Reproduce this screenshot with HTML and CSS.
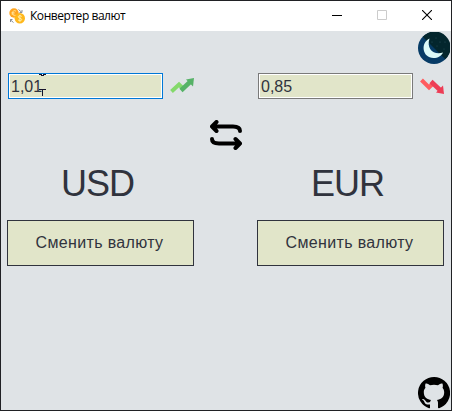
FILE: index.html
```html
<!DOCTYPE html>
<html lang="ru">
<head>
<meta charset="utf-8">
<title>Конвертер валют</title>
<link rel="stylesheet" href="styles.css">
</head>
<body>
<div class="window">
  <header class="titlebar">
    <svg class="app-icon" width="16" height="16" viewBox="0 0 16 16">
      <path d="M9.5 1.5 13 4.500M13 2v2.500h-2.500M1 11.500 4.500 14.500M1.500 14v-2.500h2" fill="none" stroke="#8a9097" stroke-width="1"/>
      <circle cx="5" cy="5" r="4.700" fill="#ffa51f"/>
      <path d="M7 3.200C4.500 1.700 3.500 3.700 3.500 5.200s1.500 3.300 3.500 2M2.500 4.700h3M2.500 6h3" fill="none" stroke="#ffe9a0" stroke-width=".9"/>
      <circle cx="10.800" cy="10.300" r="5.200" fill="#ffb81c"/>
      <path d="M12.800 8.500c-1-1.200-3.700-1-3.600.4.100 1.500 3.500 1.100 3.500 2.700 0 1.400-2.700 1.500-3.700.3M10.900 6.800v7" fill="none" stroke="#fff0b5" stroke-width=".9"/>
    </svg>
    <h1 class="title">Конвертер валют</h1>
    <div class="controls">
      <svg width="10" height="10" viewBox="0 0 10 10"><path d="M0 5.500h10" stroke="#000"/></svg>
      <svg width="10" height="10" viewBox="0 0 10 10"><path d="M.5.5h9v9h-9z" fill="none" stroke="#ccc"/></svg>
      <svg width="10" height="10" viewBox="0 0 10 10"><path d="m0 0 10 10M10 0 0 10" stroke="#000" stroke-width="1.100"/></svg>
    </div>
  </header>
  <main class="content">
    <svg class="corner" width="32" height="32" viewBox="0 0 32 32">
      <circle cx="16" cy="16" r="16" fill="#063b66"/>
      <path d="M4.700 4.700A16 16 0 1 1 27.300 27.300Z" fill="#03262d"/>
      <path d="M11.500 6.500C2 11 4.500 26 15.500 26c4.500 0 8-2 9.500-5.500C16 23.500 8 17 11.500 6.500Z" fill="#dcfaf9"/>
      <g fill="#2c555e"><circle cx="14" cy="10" r=".6"/><circle cx="18" cy="6" r=".5"/><circle cx="22" cy="10" r=".6"/><circle cx="27" cy="10" r=".6"/><circle cx="19" cy="14" r=".5"/><circle cx="26" cy="17" r=".5"/><circle cx="9" cy="27" r=".5"/></g>
    </svg>
    <div class="row fields">
      <div class="field">
        <div class="input focused">1,01
          <svg class="cursor" width="8" height="23" viewBox="0 0 8 23"><path d="M0 .5h3M4 .5h3M2 1.500h3M0 15.500h7M3.500 15v7" fill="none" stroke="#17142b"/></svg>
        </div>
        <svg width="24" height="16" viewBox="0 0 24 16"><path d="m1.500 13.500 7.500-7 4 4" fill="none" stroke="#84d96b" stroke-width="4"/><path d="m11 12.500 9-8.500" fill="none" stroke="#56b267" stroke-width="4.500"/><path d="M16 1.500 24 0l-1 8.500Z" fill="#56b267"/></svg>
      </div>
      <div class="field">
        <div class="input">0,85</div>
        <svg width="24" height="16" viewBox="0 0 24 16"><path d="m1.500 2 7.500 7.500 4-4" fill="none" stroke="#ff5b5f" stroke-width="4"/><path d="m11 3.500 9 8.500" fill="none" stroke="#ed3c55" stroke-width="4.500"/><path d="M16 14.500 24 16l-1-8.500Z" fill="#ed3c55"/></svg>
      </div>
    </div>
    <svg class="swap" width="32" height="30" viewBox="0 0 32 30"><path d="M6.500 2 2 6.500 6.500 11M2 6.500h21q7 0 7 4.500M25.500 19l4.500 4.500-4.500 4.500M30 23.500H9q-7 0-7-4.500" fill="none" stroke="#000" stroke-width="4" stroke-linecap="round" stroke-linejoin="round"/></svg>
    <div class="row">
      <section class="currency"><h2 class="code">USD</h2><button class="change">Сменить валюту</button></section>
      <section class="currency"><h2 class="code">EUR</h2><button class="change">Сменить валюту</button></section>
    </div>
    <svg class="corner github" width="32" height="32" viewBox="0 0 32 32">
      <path fill-rule="evenodd" d="M16 0A16 16 0 0 0 11 31.200c.8.200 1-.3 1-.8v-3c-4.500 1-5.400-1.900-5.400-1.900-.7-1.800-1.800-2.400-1.800-2.400-1.500-1 .1-1 .1-1 1.600.1 2.500 1.700 2.500 1.700 1.400 2.500 3.800 1.800 4.700 1.300.1-1 .6-1.700 1-2.100-3.500-.4-7.300-1.800-7.300-7.900 0-1.700.6-3.200 1.700-4.300-.2-.4-.8-2 .1-4.200 0 0 1.400-.4 4.400 1.600a15 15 0 0 1 8 0c3-2 4.400-1.600 4.400-1.600.9 2.200.3 3.800.1 4.200a6 6 0 0 1 1.700 4.300c0 6.100-3.800 7.500-7.300 7.900.6.500 1.100 1.500 1.100 3v4.400c0 .5.300 1 1.100.8A16 16 0 0 0 16 0Z"/>
    </svg>
  </main>
</div>
</body>
</html>
```
FILE: styles.css
```css
* { box-sizing: border-box; }
body { margin: 0; font-family: "Liberation Sans", Arial, sans-serif; color: #30333d; }
svg { display: block; flex: none; }
.window { display: flex; flex-direction: column; width: 452px; height: 411px; border: 1px solid #202124; background: #dfe3e6; }
.titlebar { display: flex; align-items: center; height: 30px; flex: none; padding-left: 8px; background: #fff; color: #000; }
.title { margin: 0 0 0 5px; font: 400 12px/16px "Open Sans", "Noto Sans", sans-serif; letter-spacing: -.45px; white-space: nowrap; }
.controls { display: flex; gap: 35px; margin: 0 0 2px auto; padding-right: 19px; }
.content { display: flex; flex-direction: column; flex: 1; padding: 1px 1px 1px 6px; }
.corner { align-self: flex-end; }
.row { display: grid; grid-template-columns: 250px 1fr; }
.fields { margin-top: 9px; padding-left: 1px; }
.field { display: flex; align-items: center; gap: 7px; }
.input { position: relative; width: 155px; height: 26px; padding: 0 2px; border: 1px solid #7a7a7a; background: #e1e5c9; box-shadow: inset 0 0 0 1px #fff; font-size: 16px; line-height: 25px; }
.input.focused { border-color: #0078d7; }
.cursor { position: absolute; left: 30px; top: 0; }
.app-icon { margin-bottom: 1px; }
.swap { margin: 21px 0 0 203px; }
.currency { width: 187px; }
.code { margin: 14px 0 16px; padding-right: 6px; font-size: 36px; line-height: 40px; font-weight: 400; letter-spacing: -1px; text-align: center; }
.change { display: block; width: 187px; height: 46px; padding: 0 2px 0 0; border: 1px solid #30333d; background: #e1e5c9; color: inherit; font: 16px "Liberation Sans", Arial, sans-serif; letter-spacing: .35px; }
.github { margin-top: auto; }
```
